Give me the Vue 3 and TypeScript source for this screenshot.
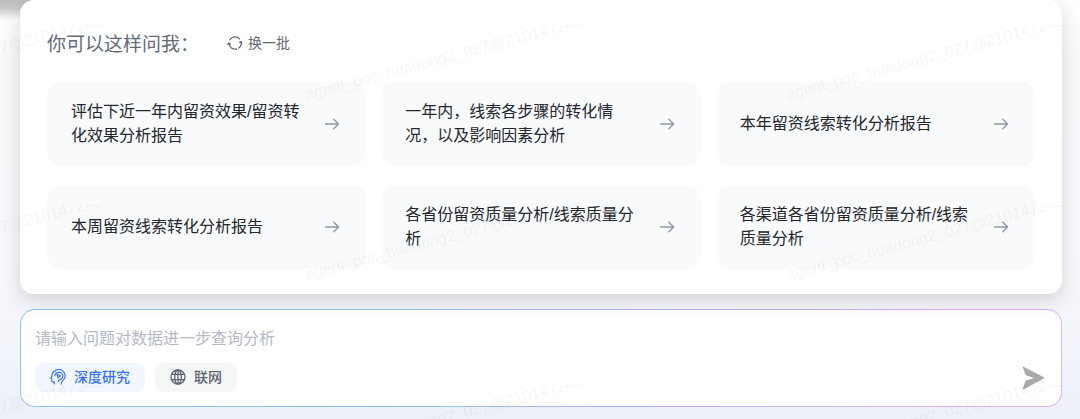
<script setup lang="ts">
import { ref } from 'vue'

const suggestions: string[] = [
  '评估下近一年内留资效果/留资转化效果分析报告',
  '一年内，线索各步骤的转化情况，以及影响因素分析',
  '本年留资线索转化分析报告',
  '本周留资线索转化分析报告',
  '各省份留资质量分析/线索质量分析',
  '各渠道各省份留资质量分析/线索质量分析',
]

const question = ref('')
const deepResearch = ref(true)
const online = ref(false)

function ask(text: string) {
  question.value = text
}
</script>

<template>
  <main class="page">
    <section class="panel">
      <header class="panel-head">
        <h2 class="title">你可以这样问我：</h2>
        <button type="button" class="refresh">
          <svg class="icon" viewBox="0 0 16 16" fill="none" stroke="currentColor" stroke-width="1.3" stroke-linecap="round" stroke-linejoin="round" aria-hidden="true">
            <path d="M2.8 4.8A6.2 6.2 0 0 1 12.6 3.9" />
            <path d="M14.1 6.8A6.2 6.2 0 0 1 11.6 13" />
            <path d="M9.6 14A6.2 6.2 0 0 1 1.9 8.3" />
            <path d="M14.9 8.2L14.1 6.6L12.7 7.4M.8 9.3L1.9 8.1L3.3 9.1" />
          </svg>
          换一批
        </button>
      </header>
      <div class="grid">
        <button v-for="item in suggestions" :key="item" type="button" class="card" @click="ask(item)">
          <span class="card-text">{{ item }}</span>
          <svg class="arrow" viewBox="0 0 20 20" fill="none" stroke="currentColor" stroke-width="1.4" stroke-linecap="round" stroke-linejoin="round" aria-hidden="true">
            <path d="M3.6 10H16.4M11.8 5.2L16.6 10L11.8 14.8" />
          </svg>
        </button>
      </div>
    </section>

    <form class="composer" @submit.prevent>
      <input v-model="question" class="field" type="text" aria-label="问题" placeholder="请输入问题对数据进一步查询分析" />
      <div class="tools">
        <button type="button" class="chip" :class="{ active: deepResearch }" :aria-pressed="deepResearch" @click="deepResearch = !deepResearch">
          <svg class="icon" viewBox="0 0 16 16" fill="none" stroke="currentColor" stroke-width="1.2" stroke-linecap="round" stroke-linejoin="round" aria-hidden="true">
            <path d="M4.2 15V12.8H2.6C2 12.8 1.8 12.4 1.8 11.8V10.1L.7 9.3L2 7.1C1.9 5.4 2.3 4 3.3 2.9" />
            <path d="M3.3 2.9L4.9 2.5L5.4 1.3C8 .2 11 .3 13 2.1C15.5 4.3 15.8 8 13.8 10.4C12.5 11.9 11.3 12.7 11.2 15.2" />
            <path d="M4.9 6.6C5.2 4.7 6.6 3.4 8.9 3.4C11.3 3.4 12.8 4.9 12.8 7C12.8 9.1 11.5 10.3 9.4 10.6L8.3 12.4" />
            <path d="M7 5.2L10.6 6.8L8 8.9Z" />
          </svg>
          深度研究
        </button>
        <button type="button" class="chip" :class="{ active: online }" :aria-pressed="online" @click="online = !online">
          <svg class="icon" viewBox="0 0 16 16" fill="none" stroke="currentColor" stroke-width="1.3" aria-hidden="true">
            <circle cx="8" cy="8" r="7" />
            <ellipse cx="8" cy="8" rx="3.3" ry="7" />
            <path d="M8 1V15M1.8 5.3H14.2M1.8 10.7H14.2" />
          </svg>
          联网
        </button>
        <button type="submit" class="send" aria-label="发送">
          <svg viewBox="0 0 24 24" width="24" height="24" fill="currentColor" aria-hidden="true">
            <path d="M1.8 1.2C1.5.6 2 .4 2.5.7L22.5 11.1C23.3 11.6 23.3 12.3 22.5 12.8L2.6 23.2C1.9 23.5 1.6 23.1 1.8 22.5L4.4 15.3C4.6 14.8 4.9 14.5 5.4 14.3L13.1 12L5.4 9.4C4.9 9.2 4.6 8.9 4.4 8.5Z" />
          </svg>
        </button>
      </div>
    </form>

    <svg class="watermark" aria-hidden="true">
      <defs>
        <pattern id="mark" x="300" y="25" width="481" height="180" patternUnits="userSpaceOnUse">
          <text class="mark-text" x="7" y="75" transform="rotate(-15 7 75)">agent_poc_huadong2_027@2101472432</text>
        </pattern>
      </defs>
      <rect width="100%" height="100%" fill="url(#mark)" />
    </svg>
  </main>
</template>

<style>
body {
  margin: 0;
}
</style>

<style scoped>
.page {
  position: relative;
  box-sizing: border-box;
  min-height: 100vh;
  padding: 0 18px 12px 20px;
  overflow: hidden;
  font-family: "Liberation Sans", "Noto Sans CJK SC", sans-serif;
  background:
    linear-gradient(#bdbdbd 0, #c9c9c9 8px, transparent 20px) 0 0 / 32px 20px no-repeat,
    linear-gradient(#fefefe 0, #fcfcfd 40px, #f8f9fb 60px, #f8f9fc 250px, #edf0f9 100%);
}

button {
  margin: 0;
  border: 0;
  font-family: inherit;
  cursor: pointer;
}

.panel {
  position: relative;
  z-index: 1;
  padding: 31px 27px 25px;
  border-radius: 14px;
  background: #fff;
  box-shadow: 0 6px 20px rgba(0, 0, 0, 0.15);
}

.panel-head {
  display: flex;
  align-items: center;
  gap: 28px;
  height: 24px;
  margin-bottom: 27px;
  color: #646b78;
}

.title {
  margin: 0;
  font-family: "Noto Sans CJK SC", sans-serif;
  font-size: 19px;
  font-weight: 400;
  line-height: 24px;
}

.refresh {
  display: flex;
  align-items: center;
  gap: 5px;
  padding: 0;
  background: none;
  color: inherit;
  font-size: 14px;
  line-height: 24px;
}

.icon {
  flex: none;
  width: 16px;
  height: 16px;
}

.grid {
  display: grid;
  grid-template-columns: repeat(3, 1fr);
  gap: 19px 15px;
}

.card {
  display: flex;
  align-items: center;
  gap: 16px;
  min-height: 84px;
  padding: 18px 24px;
  border-radius: 14px;
  background: #f9fafc;
  color: #24272d;
  font-size: 16px;
  line-height: 24px;
  text-align: left;
}

.card-text {
  flex: 1;
}

.arrow {
  flex: none;
  width: 20px;
  height: 20px;
  color: #8f99a8;
}

.composer {
  margin-top: 15px;
  padding: 17px 14px 14px;
  border: 1px solid transparent;
  border-radius: 15px;
  background:
    linear-gradient(#fff, #fff) padding-box,
    linear-gradient(90deg, #8fc4fb 0%, #94bffb 35%, #b9b3f8 65%, #dfb0fb 90%) border-box;
}

.field {
  display: block;
  box-sizing: border-box;
  width: 100%;
  height: 24px;
  padding: 0;
  border: 0;
  outline: 0;
  background: transparent;
  color: #24272d;
  font-family: inherit;
  font-size: 16px;
  line-height: 24px;
}

.field::placeholder {
  color: #b5bac6;
  opacity: 1;
}

.tools {
  display: flex;
  align-items: center;
  gap: 10px;
  margin-top: 12px;
}

.chip {
  display: flex;
  align-items: center;
  gap: 8px;
  height: 29px;
  padding: 0 15px 1px;
  border-radius: 8px;
  background: #f5f6f8;
  color: #5b6370;
  font-size: 14px;
  font-weight: 500;
  line-height: 20px;
}

.chip.active {
  background: #f2f7ff;
  color: #3672f8;
}

.send {
  display: flex;
  margin-left: auto;
  padding: 0 2px;
  background: none;
  color: #a9a9a9;
}

.watermark {
  position: absolute;
  z-index: 2;
  inset: 0;
  width: 100%;
  height: 100%;
  pointer-events: none;
}

.mark-text {
  fill: rgba(0, 0, 0, 0.035);
  font-family: "Liberation Sans", sans-serif;
  font-size: 16px;
}
</style>
